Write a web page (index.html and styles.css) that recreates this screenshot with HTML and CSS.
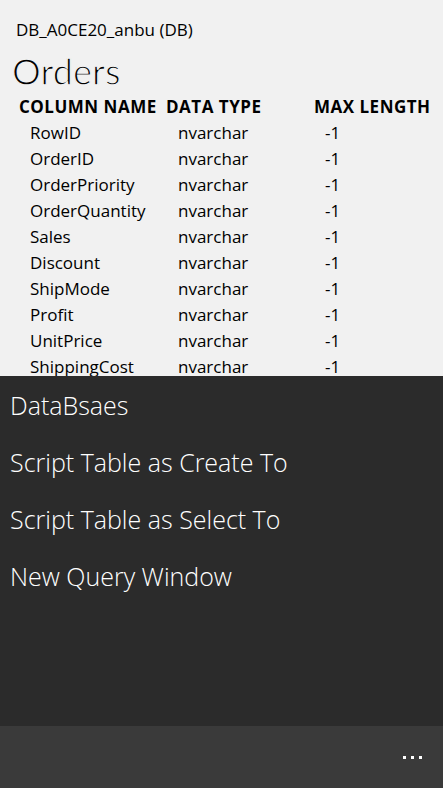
FILE: index.html
```html
<!DOCTYPE html>
<html>
<head>
<meta charset="utf-8">
<link rel="stylesheet" href="styles.css">
</head>
<body>
<div class="screen">
  <section class="details">
    <div class="db-name">DB_A0CE20_anbu (DB)</div>
    <h1 class="table-name">Orders</h1>
    <div class="grid">
      <div class="head">COLUMN NAME</div><div class="head">DATA TYPE</div><div class="head">MAX LENGTH</div>
      <div class="cell name">RowID</div><div class="cell type">nvarchar</div><div class="cell len">-1</div>
      <div class="cell name">OrderID</div><div class="cell type">nvarchar</div><div class="cell len">-1</div>
      <div class="cell name">OrderPriority</div><div class="cell type">nvarchar</div><div class="cell len">-1</div>
      <div class="cell name">OrderQuantity</div><div class="cell type">nvarchar</div><div class="cell len">-1</div>
      <div class="cell name">Sales</div><div class="cell type">nvarchar</div><div class="cell len">-1</div>
      <div class="cell name">Discount</div><div class="cell type">nvarchar</div><div class="cell len">-1</div>
      <div class="cell name">ShipMode</div><div class="cell type">nvarchar</div><div class="cell len">-1</div>
      <div class="cell name">Profit</div><div class="cell type">nvarchar</div><div class="cell len">-1</div>
      <div class="cell name">UnitPrice</div><div class="cell type">nvarchar</div><div class="cell len">-1</div>
      <div class="cell name">ShippingCost</div><div class="cell type">nvarchar</div><div class="cell len">-1</div>
    </div>
  </section>
  <nav class="menu">
    <div class="menu-item">DataBsaes</div>
    <div class="menu-item">Script Table as Create To</div>
    <div class="menu-item">Script Table as Select To</div>
    <div class="menu-item">New Query Window</div>
  </nav>
  <footer class="appbar">
    <div class="more"><span></span><span></span><span></span></div>
  </footer>
</div>
</body>
</html>
```
FILE: styles.css
```css
html, body {
  margin: 0;
  padding: 0;
}
body {
  font-family: "Open Sans", "Noto Sans", sans-serif;
  background: #f1f1f1;
}
.screen {
  width: 443px;
  height: 788px;
  display: flex;
  flex-direction: column;
  overflow: hidden;
}
.details {
  height: 376px;
  flex: none;
  overflow: hidden;
  background: #f1f1f1;
  color: #000;
  padding: 18px 0 0 0;
  box-sizing: border-box;
}
.db-name {
  font-size: 17px;
  line-height: 24px;
  padding-left: 16px;
}
.table-name {
  margin: 8px 0 0 0;
  font-family: "Lato", "Open Sans", sans-serif;
  font-weight: 400;
  font-size: 36px;
  line-height: 43px;
  padding-left: 12px;
  -webkit-text-stroke: 1.3px #f1f1f1;
}
.grid {
  display: grid;
  grid-template-columns: 147px 148px 1fr;
  padding-left: 19px;
}
.head {
  font-weight: 700;
  font-size: 17px;
  line-height: 27px;
  letter-spacing: 0.5px;
}
.cell {
  font-size: 17px;
  line-height: 26px;
}
.name {
  padding-left: 11px;
}
.type {
  padding-left: 12px;
}
.len {
  padding-left: 11px;
}
.menu {
  height: 350px;
  flex: none;
  background: #2b2b2b;
  color: #fff;
  padding-top: 1px;
  box-sizing: border-box;
}
.menu-item {
  font-size: 25px;
  font-weight: 300;
  line-height: 57px;
  padding-left: 10px;
}
.appbar {
  flex: 1;
  background: #3a3a3a;
  display: flex;
  justify-content: flex-end;
  align-items: flex-start;
}
.more {
  display: flex;
  gap: 5px;
  margin: 30px 21px 0 0;
}
.more span {
  width: 3px;
  height: 3px;
  background: #fff;
}
```
